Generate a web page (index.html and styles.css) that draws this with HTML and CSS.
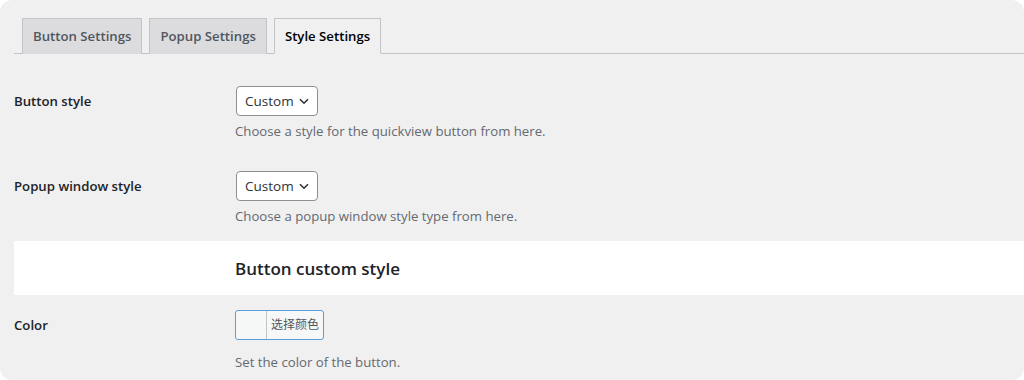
FILE: index.html
```html
<!DOCTYPE html>
<html>
<head>
  <meta charset="utf-8">
  <title>Style Settings</title>
  <link rel="stylesheet" href="styles.css">
</head>
<body>
  <div class="frame">
    <nav class="tabs">
      <a class="tab">Button Settings</a>
      <a class="tab">Popup Settings</a>
      <a class="tab active">Style Settings</a>
    </nav>
    <div class="form">
      <div class="row">
        <div class="label">Button style</div>
        <div class="field">
          <div class="select">Custom<svg class="chev" width="10" height="7" viewBox="0 0 10 7"><path d="M1 1.2l4 4 4-4" fill="none" stroke="#2c3338" stroke-width="1.6"/></svg></div>
          <p class="desc">Choose a style for the quickview button from here.</p>
        </div>
      </div>
      <div class="row">
        <div class="label">Popup window style</div>
        <div class="field">
          <div class="select">Custom<svg class="chev" width="10" height="7" viewBox="0 0 10 7"><path d="M1 1.2l4 4 4-4" fill="none" stroke="#2c3338" stroke-width="1.6"/></svg></div>
          <p class="desc">Choose a popup window style type from here.</p>
        </div>
      </div>
      <div class="section">
        <h3>Button custom style</h3>
      </div>
      <div class="row">
        <div class="label">Color</div>
        <div class="field">
          <div class="color-btn"><span class="swatch"></span><span class="color-text">选择颜色</span></div>
          <p class="desc">Set the color of the button.</p>
        </div>
      </div>
    </div>
  </div>
</body>
</html>
```
FILE: styles.css
```css
html, body{
  margin: 0;
  background: #fff;
}
.frame{
  width: 1024px;
  height: 380px;
  box-sizing: border-box;
  background: #f0f0f1;
  border-radius: 12px;
  overflow: hidden;
  padding-left: 14px;
  font-family: "Open Sans", "Noto Sans CJK SC", sans-serif;
  font-size: 13.2px;
  color: #1d2327;
}

.tabs{
  display: flex;
  gap: 7px;
  padding: 17px 0 0 7px;
  border-bottom: 1px solid #c3c4c7;
  height: 36px;
  box-sizing: content-box;
}
.tab{
  display: block;
  height: 36px;
  box-sizing: border-box;
  padding: 0 10px;
  line-height: 34px;
  font-size: 13.2px;
  font-weight: 600;
  color: #50575e;
  background: #dcdcde;
  border: 1px solid #c3c4c7;
  border-bottom: none;
  align-self: flex-end;
  margin-bottom: -1px;
}
.tab:first-child{
  margin-left: 1px;
}
.tab.active{
  background: #f0f0f1;
  color: #000;
  border-bottom: 1px solid #f0f0f1;
}

.form{
  margin-top: 17px;
}
.row{
  display: flex;
  padding: 15px 0;
}
.label{
  width: 221px;
  flex: none;
  font-weight: 600;
  line-height: 30px;
}
.field{
  flex: 1;
}
.select{
  display: inline-flex;
  align-items: center;
  height: 30px;
  box-sizing: border-box;
  padding: 0 8px;
  margin-left: 1px;
  background: #fff;
  border: 1px solid #8c8f94;
  border-radius: 4px;
  color: #2c3338;
  font-size: 13.5px;
}
.chev{
  margin-left: 5px;
}
.desc{
  margin: 5px 0 0;
  line-height: 20px;
  color: #646970;
}

.section{
  background: #fff;
  height: 54px;
  padding-left: 221px;
  display: flex;
  align-items: center;
}
.section h3{
  margin: 0;
  font-size: 17px;
  font-weight: 600;
  color: #1d2327;
}

.color-btn{
  display: inline-flex;
  height: 30px;
  width: 89px;
  box-sizing: border-box;
  border: 1px solid #5b9dd9;
  border-radius: 3px;
  background: #f6f7f7;
  overflow: hidden;
}
.swatch{
  width: 30px;
  border-right: 1px solid #c3c4c7;
}
.color-text{
  flex: 1;
  line-height: 28px;
  text-align: center;
  font-size: 12px;
  color: #50575e;
}
.row:last-child .desc{
  margin-top: 9px;
}
```
